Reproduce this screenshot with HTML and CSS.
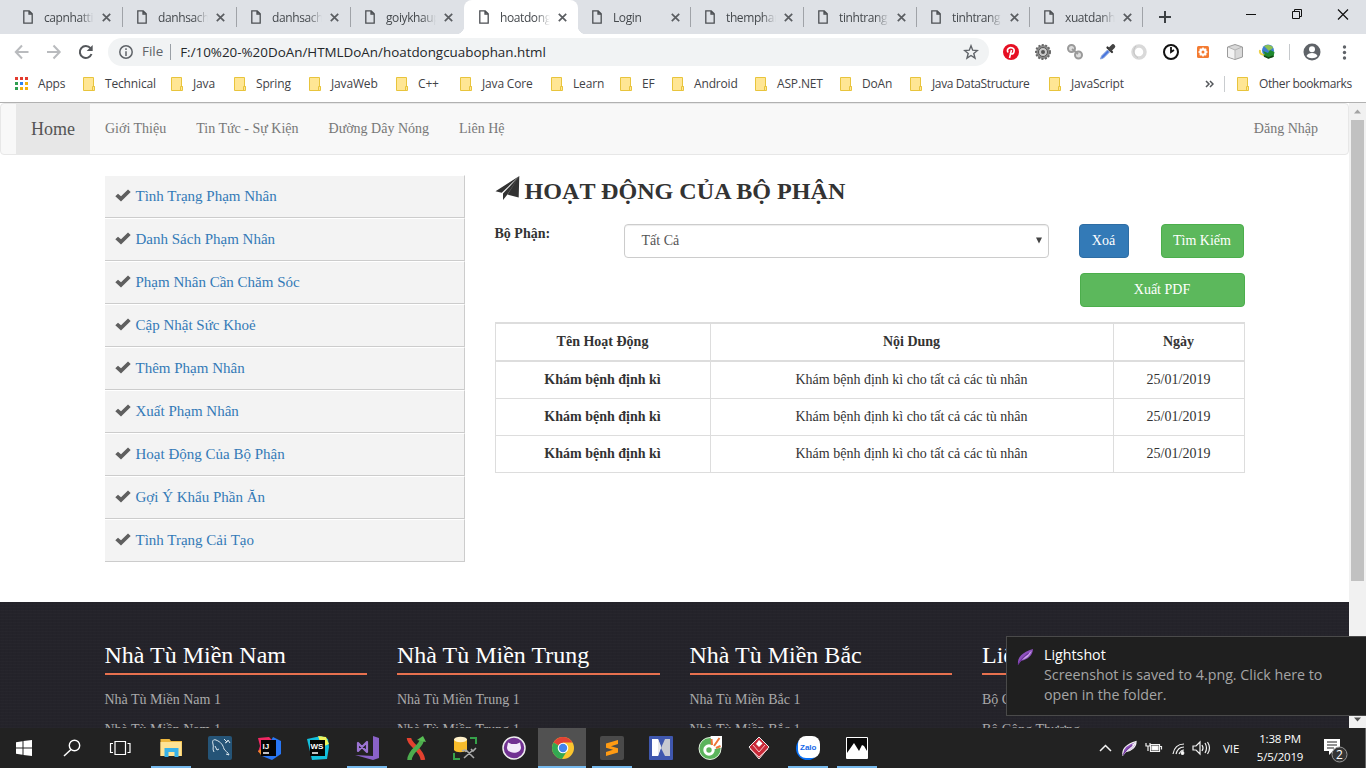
FILE: index.html
```html
<!DOCTYPE html>
<html lang="vi">
<head>
<meta charset="utf-8">
<title>hoatdongcuabophan</title>
<link rel="stylesheet" href="styles.css">
</head>
<body>
<svg class="defs" width="0" height="0">
  <defs>
    <symbol id="page" viewBox="0 0 10 14"><path d="M.8.8h5.4l3 3v9.4H.8z M6 .8V4h3.2" fill="none" stroke="#4c4f53" stroke-width="1.3"/></symbol>
    <symbol id="close" viewBox="0 0 9 9"><path d="M.8.8l7.4 7.4M8.2.8L.8 8.200" stroke="#5a5d61" stroke-width="1.7" fill="none"/></symbol>
    <symbol id="folder" viewBox="0 0 12 14"><path d="M.5.5h10v9h1v4H.5z" fill="#ffe694" stroke="#e8c43c"/><path d="M9.500 13.500V9.500h2" fill="none" stroke="#e8c43c"/></symbol>
    <symbol id="check" viewBox="0 0 16 13"><path d="M.3 7.300L3 4.700l3 2.600L13 .5l2.700 2.600L6 12.500z" fill="#5f5f5f"/></symbol>
    <symbol id="feather" viewBox="0 0 16 16"><path d="M1 15.500C0 9 5 4 15 1c0 6-5 10-11 11z" fill="#8d50bd"/><path d="M4 11.500C7 8 10 6 14 2.500c-2 4.500-5 7.500-9 8.500z" fill="#cba6e8"/><path d="M1 15.500C4 10 8 7 11 5" stroke="#6d3299" fill="none"/></symbol>
  </defs>
</svg>

<header class="tabbar">
  <div class="tab"><svg class="tab-icon"><use href="#page"/></svg><span class="tab-name">capnhatti</span><svg class="tab-close"><use href="#close"/></svg></div>
  <div class="tab"><svg class="tab-icon"><use href="#page"/></svg><span class="tab-name">danhsach</span><svg class="tab-close"><use href="#close"/></svg></div>
  <div class="tab"><svg class="tab-icon"><use href="#page"/></svg><span class="tab-name">danhsach</span><svg class="tab-close"><use href="#close"/></svg></div>
  <div class="tab no-sep"><svg class="tab-icon"><use href="#page"/></svg><span class="tab-name">goiykhaup</span><svg class="tab-close"><use href="#close"/></svg></div>
  <div class="tab active"><svg class="tab-icon"><use href="#page"/></svg><span class="tab-name">hoatdong</span><svg class="tab-close"><use href="#close"/></svg></div>
  <div class="tab"><svg class="tab-icon"><use href="#page"/></svg><span class="tab-name">Login</span><svg class="tab-close"><use href="#close"/></svg></div>
  <div class="tab"><svg class="tab-icon"><use href="#page"/></svg><span class="tab-name">themphan</span><svg class="tab-close"><use href="#close"/></svg></div>
  <div class="tab"><svg class="tab-icon"><use href="#page"/></svg><span class="tab-name">tinhtrang</span><svg class="tab-close"><use href="#close"/></svg></div>
  <div class="tab"><svg class="tab-icon"><use href="#page"/></svg><span class="tab-name">tinhtrang</span><svg class="tab-close"><use href="#close"/></svg></div>
  <div class="tab"><svg class="tab-icon"><use href="#page"/></svg><span class="tab-name">xuatdanh</span><svg class="tab-close"><use href="#close"/></svg></div>
  <svg class="new-tab" width="12" height="12"><path d="M6 0v12M0 6h12" stroke="#3c4043" stroke-width="2"/></svg>
  <svg class="window-buttons" width="110" height="28" fill="none" stroke="#111"><path d="M5 14.500h10"/><path d="M51.500 11.500h7v7h-7zM53.500 11V9.500h7v7h-1.500"/><path d="M97 9.500l10 10M107 9.500l-10 10" stroke-width="1.200"/></svg>
</header>

<div class="toolbar">
  <svg class="nav-icons" width="90" height="20" fill="none" stroke="#b9bbbe" stroke-width="2">
    <path d="M14.500 10H2M8 3.500L1.800 10 8 16.500M33 10h12.500M39.500 3.500l6.200 6.500-6.200 6.500"/>
    <path d="M76.500 6.200A6 6 0 1 0 77.500 12" stroke="#54575b"/><path d="M78.700 3v6h-6z" fill="#54575b" stroke="none"/>
  </svg>
  <div class="omnibox">
    <svg width="14" height="14" fill="none" stroke="#5f6368" stroke-width="1.500"><circle cx="7" cy="7" r="6.200"/><path d="M7 6.300V11M7 3.200v1.700"/></svg>
    <span class="scheme">File</span>
    <span class="address">F:/10%20-%20DoAn/HTMLDoAn/hoatdongcuabophan.html</span>
    <svg class="star" width="16" height="16"><path d="M8 1.800l1.700 4.400 4.700.3-3.600 3 1.200 4.600-4-2.600-4 2.600 1.200-4.600-3.600-3 4.700-.3z" fill="none" stroke="#5f6368" stroke-width="1.400"/></svg>
  </div>
  <svg class="extensions" width="370" height="20">
    <circle cx="11" cy="10" r="8" fill="#e60f23"/><path d="M9.500 16l2-8M8 10.500c-2-4 2-5.500 4.500-4.500 3 1.200 1.500 6-1 6-1 0-1.300-.5-1.500-1" fill="none" stroke="#fff" stroke-width="1.600"/>
    <circle cx="43" cy="10" r="7" fill="#8c8c8c" stroke="#686868" stroke-width="2" stroke-dasharray="2 1.500"/><circle cx="43" cy="10" r="4.500" fill="#c9c9c9" stroke="#555"/><circle cx="43" cy="10" r="2" fill="#555"/>
    <g fill="#ddd" stroke="#9a9a9a" stroke-width="2"><circle cx="71.500" cy="6.500" r="3.500"/><circle cx="78.500" cy="13" r="3.500"/><path d="M72 7l6 5"/></g>
    <path d="M100.500 17l1-3 6-6 2 2-6 6z" fill="#4977df" stroke="#8aa4dc"/><path d="M107.500 5.500l4.500 4.500" stroke="#333" stroke-width="2.200" stroke-linecap="round"/><path d="M110.500 7l2.500-2.500" stroke="#444" stroke-width="4.500" stroke-linecap="round"/>
    <circle cx="139" cy="10" r="6" fill="none" stroke="#d9d9d9" stroke-width="3.500"/><path d="M136 4c-4 4-2 10 2 12" fill="none" stroke="#c3c3c3"/>
    <circle cx="171" cy="10" r="7" fill="#fff" stroke="#111" stroke-width="2"/><path d="M171 5v5l3-2" fill="none" stroke="#111" stroke-width="1.800"/>
    <rect x="197" y="4" width="12" height="12" rx="1.500" fill="#f47b31"/><circle cx="203" cy="10" r="2.600" fill="none" stroke="#fff" stroke-width="2.200"/><path d="M203 5.500V7M203 13v1.500M198.500 10h1.500M206 10h1.500M199.800 6.800l1 1M205.200 12.200l1 1M206.200 6.800l-1 1M200.800 12.200l-1 1" stroke="#fff" stroke-width="1.500"/>
    <path d="M235 2.500l7.500 2.500v10l-7.500 2.500-7.500-2.500V5z" fill="#d9d9d9" stroke="#9b9b9b"/><path d="M228 5l7 3v9l-7-2.500z" fill="#f2f2f2"/><path d="M228 5l7 3 7-3M235 8v9" fill="none" stroke="#b5b5b5"/>
    <circle cx="268" cy="8.500" r="6" fill="#3c7fd0"/><path d="M264 4c3-2 8-1 9 2l-4 3z" fill="#8cc152"/><path d="M260 8c-1 5 5 6 9 4" fill="none" stroke="#ecd24a" stroke-width="2"/><path d="M263 9l5 2 2-3 4.500 2-1 5-5.500 1.500-5-3.500 2-1z" fill="#1f8a2e"/><path d="M264 14l4.500 2 5-2" stroke="#164917" stroke-width="1.500" fill="none"/>
    <path d="M289.500 2v16" stroke="#c6c9cc"/>
    <circle cx="312" cy="10" r="8.500" fill="#5f6368"/><circle cx="312" cy="7.300" r="3" fill="#fff"/><path d="M306.500 14c1.500-4 9.500-4 11 0-2.500 3-8.500 3-11 0z" fill="#fff"/>
    <g fill="#5f6368"><circle cx="344.500" cy="5" r="1.700"/><circle cx="344.500" cy="10.500" r="1.700"/><circle cx="344.500" cy="16" r="1.700"/></g>
  </svg>
</div>

<nav class="bookmarks">
  <a class="bookmark"><svg width="13" height="13"><path d="M0 0h3v3H0zM5 0h3v3H5zM10 0h3v3h-3z" fill="#e33b2e"/><path d="M0 5h3v3H0zM0 10h3v3H0z" fill="#2f9e50"/><path d="M5 5h3v3H5z" fill="#2c82f0"/><path d="M10 5h3v3h-3zM5 10h3v3H5zM10 10h3v3h-3z" fill="#f3b10b"/></svg><span>Apps</span></a>
  <a class="bookmark"><svg><use href="#folder"/></svg><span>Technical</span></a>
  <a class="bookmark"><svg><use href="#folder"/></svg><span>Java</span></a>
  <a class="bookmark"><svg><use href="#folder"/></svg><span>Spring</span></a>
  <a class="bookmark"><svg><use href="#folder"/></svg><span>JavaWeb</span></a>
  <a class="bookmark"><svg><use href="#folder"/></svg><span>C++</span></a>
  <a class="bookmark"><svg><use href="#folder"/></svg><span>Java Core</span></a>
  <a class="bookmark"><svg><use href="#folder"/></svg><span>Learn</span></a>
  <a class="bookmark"><svg><use href="#folder"/></svg><span>EF</span></a>
  <a class="bookmark"><svg><use href="#folder"/></svg><span>Android</span></a>
  <a class="bookmark"><svg><use href="#folder"/></svg><span>ASP.NET</span></a>
  <a class="bookmark"><svg><use href="#folder"/></svg><span>DoAn</span></a>
  <a class="bookmark tight"><svg><use href="#folder"/></svg><span>Java DataStructure</span></a>
  <a class="bookmark"><svg><use href="#folder"/></svg><span>JavaScript</span></a>
  <div class="more"><svg width="9" height="8"><path d="M1 1l3 3-3 3M5 1l3 3-3 3" fill="none" stroke="#54575b" stroke-width="1.500"/></svg></div>
  <a class="bookmark tight"><svg><use href="#folder"/></svg><span>Other bookmarks</span></a>
</nav>

<div class="viewport">
  <div class="document">
    <nav class="site-nav">
      <a class="home">Home</a><a>Giới Thiệu</a><a>Tin Tức - Sự Kiện</a><a>Đường Dây Nóng</a><a>Liên Hệ</a><a class="login">Đăng Nhập</a>
    </nav>
    <div class="container">
      <ul class="side-menu">
        <li><svg><use href="#check"/></svg><a>Tình Trạng Phạm Nhân</a></li>
        <li><svg><use href="#check"/></svg><a>Danh Sách Phạm Nhân</a></li>
        <li><svg><use href="#check"/></svg><a>Phạm Nhân Cần Chăm Sóc</a></li>
        <li><svg><use href="#check"/></svg><a>Cập Nhật Sức Khoẻ</a></li>
        <li><svg><use href="#check"/></svg><a>Thêm Phạm Nhân</a></li>
        <li><svg><use href="#check"/></svg><a>Xuất Phạm Nhân</a></li>
        <li><svg><use href="#check"/></svg><a>Hoạt Động Của Bộ Phận</a></li>
        <li><svg><use href="#check"/></svg><a>Gợi Ý Khẩu Phần Ăn</a></li>
        <li><svg><use href="#check"/></svg><a>Tình Trạng Cải Tạo</a></li>
      </ul>
      <main class="main">
        <h1><svg width="25" height="25"><path d="M24.300 0L.5 15.300l6.200 1.500z M24.300 0L8 17.500V24l4-5z M24.300 0L12.500 18.500l11.200 3z" fill="#333"/></svg><span>HOẠT ĐỘNG CỦA BỘ PHẬN</span></h1>
        <div class="filter">
          <label>Bộ Phận:</label>
          <div class="select"><span>Tất Cả</span><svg width="6" height="7"><path d="M0 .5h6L3 6.500z" fill="#444"/></svg></div>
          <button class="btn primary">Xoá</button>
          <button class="btn success">Tìm Kiếm</button>
        </div>
        <button class="btn success export">Xuất PDF</button>
        <table>
          <thead><tr><th>Tên Hoạt Động</th><th>Nội Dung</th><th>Ngày</th></tr></thead>
          <tbody>
            <tr><th>Khám bệnh định kì</th><td>Khám bệnh định kì cho tất cả các tù nhân</td><td>25/01/2019</td></tr>
            <tr><th>Khám bệnh định kì</th><td>Khám bệnh định kì cho tất cả các tù nhân</td><td>25/01/2019</td></tr>
            <tr><th>Khám bệnh định kì</th><td>Khám bệnh định kì cho tất cả các tù nhân</td><td>25/01/2019</td></tr>
          </tbody>
        </table>
      </main>
    </div>
    <footer class="footer">
      <section><h2>Nhà Tù Miền Nam</h2><p>Nhà Tù Miền Nam 1</p><p>Nhà Tù Miền Nam 1</p></section>
      <section><h2>Nhà Tù Miền Trung</h2><p>Nhà Tù Miền Trung 1</p><p>Nhà Tù Miền Trung 1</p></section>
      <section><h2>Nhà Tù Miền Bắc</h2><p>Nhà Tù Miền Bắc 1</p><p>Nhà Tù Miền Bắc 1</p></section>
      <section><h2>Liê</h2><p>Bộ C</p><p>Bộ Công Thương</p></section>
    </footer>
  </div>
  <div class="scrollbar"><svg width="17" height="17"><path d="M5 10.500l3.500-4 3.500 4z" fill="#a3a3a3"/></svg><div class="thumb"></div><svg class="down" width="17" height="17"><path d="M5 6.500l3.500 4 3.500-4z" fill="#505050"/></svg></div>
</div>

<div class="taskbar">
  <div class="app"><svg viewBox="0 0 24 24"><path d="M4 6.200l6.500-1V11.500H4zM11.500 5L20 4v7.500h-8.500zM4 12.500h6.500v6.300L4 17.800zM11.500 12.500H20V20l-8.500-1z" fill="#fff"/></svg></div>
  <div class="app"><svg viewBox="0 0 24 24"><circle cx="14.500" cy="9.500" r="5.200" fill="none" stroke="#fff" stroke-width="1.400"/><path d="M11 13.500L4 20" stroke="#fff" stroke-width="1.500"/></svg></div>
  <div class="app"><svg viewBox="0 0 24 24" fill="none" stroke="#fff" stroke-width="1.200"><path d="M7 5.500h10.500v13H7zM5 7.500H2.500v9H5M19.500 7.500H22v9h-2.500"/></svg></div>
  <div class="app open"><svg viewBox="0 0 24 24"><path d="M1.500 3h9l1.500 2h11v15H1.500z" fill="#efb83e"/><path d="M1.500 6h21v14h-21z" fill="#ffe394"/><path d="M5.500 12h14v9h-4v-5h-6v5h-4z" fill="#38b2e9"/></svg></div>
  <div class="app"><svg viewBox="0 0 24 24"><rect width="24" height="24" rx="2" fill="#255477"/><path d="M6 16c-2-3 0-5-1-8s0-5 3-4c5 2 7 5 8 9 1 2 4 3 5 6l-3-1M7 10l2 4 2-1M16 3l3 3 1-2 2 3M19 6l-2 1" stroke="#dce8ef" fill="none"/></svg></div>
  <div class="app"><svg viewBox="0 0 24 24"><path d="M1 2l11-1 5 5-8 12-8-2 2-6z" fill="#f12863"/><path d="M16 1l8 4v13l-9 6-10-4z" fill="#2876f4"/><path d="M1 15l5-3 3 8-5-1z" fill="#f18b25"/><rect x="4" y="4" width="15" height="16" fill="#050505"/><text x="5.500" y="12.500" class="jet">IJ</text><path d="M6 17h6" stroke="#fff" stroke-width="1.500"/></svg></div>
  <div class="app"><svg viewBox="0 0 24 24"><path d="M1 3l14-3 7 3 1 8-2 12-15 1z" fill="#13bfdc"/><path d="M12 0l8 1 3 7-7 3z" fill="#eff45d"/><rect x="4" y="4" width="15" height="16" fill="#050505"/><text x="4.500" y="12.500" class="jet">WS</text><path d="M6 17h6" stroke="#fff" stroke-width="1.500"/></svg></div>
  <div class="app open"><svg viewBox="0 0 24 24"><path d="M18 0l6 2v20l-6 2L0 19l18 1z" fill="#8a62c8"/><path d="M3 7v8l9-9v10L3 7z" fill="none" stroke="#9c74d3" stroke-width="2.200" stroke-linejoin="round"/></svg></div>
  <div class="app"><svg viewBox="0 0 24 24"><path d="M5 2c0 7 13 11 14 22" stroke="#e3412f" stroke-width="4.500" fill="none"/><path d="M5.500 24C5.500 14 18 11 18 3" stroke="#4dad4e" stroke-width="4.500" fill="none"/><path d="M13 4l6-4 3 6z" fill="#58bf54"/></svg></div>
  <div class="app"><svg viewBox="0 0 24 24"><path d="M1 3v11c2 3 10 3 13 0V3z" fill="#f8bc2b"/><ellipse cx="7.500" cy="3.500" rx="6.500" ry="2.800" fill="#fff1c9"/><path d="M17 2h6v6M1 17v6h6" fill="none" stroke="#36a24a" stroke-width="2"/><path d="M11 22l9-8M13 14l8 8M18 13l2 2 3-3M9 15l3-1 1 2" stroke="#aaa" stroke-width="1.600" fill="none"/></svg></div>
  <div class="app"><svg viewBox="0 0 24 24"><circle cx="12" cy="12" r="11" fill="#713192" stroke="#eee" stroke-width="1.500"/><path d="M6 6.500l3.500 1.500h5L18 6.500l1 5c0 7-14 7-14 0z" fill="#f3eafa"/></svg></div>
  <div class="app open current"><svg viewBox="0 0 24 24"><circle cx="12" cy="12" r="11" fill="#fbc52e"/><path d="M12 12L2.500 6.500A11 11 0 0 1 21.500 6.500H12z" fill="#e14235"/><path d="M2.500 6.500A11 11 0 0 0 11 23l5-8-4-3z" fill="#33a852"/><circle cx="12" cy="12" r="5.300" fill="#fff"/><circle cx="12" cy="12" r="4.200" fill="#4384ed"/></svg></div>
  <div class="app open"><svg viewBox="0 0 24 24"><rect width="24" height="24" rx="2" fill="#4a4a4a"/><path d="M6 7.500l12-3.500v4l-7 2.300 7 2v4.200L6 20v-4l7-2.300-7-2z" fill="#ff9b13"/></svg></div>
  <div class="app"><svg viewBox="0 0 24 24"><rect width="24" height="24" rx="1" fill="#3f57ae"/><path d="M3 3h6l3 9-3 8H3z" fill="#fff"/><path d="M21 3h-5l-4 9 4 8h5z" fill="#c7c9d1"/><path d="M9 3l3 7-3 10z" fill="#e8e8e8"/></svg></div>
  <div class="app"><svg viewBox="0 0 24 24"><circle cx="12" cy="12.500" r="11" fill="#5bb45c" stroke="#e4f3e0"/><circle cx="11" cy="14" r="4.200" fill="none" stroke="#fff" stroke-width="3"/><path d="M12.500 0H24v11.500l-9.500 2z" fill="#fff"/><path d="M14 9l-.5-6M16 10l5.500-8M18 12l4.500-2" stroke="#ed7638" stroke-width="2"/></svg></div>
  <div class="app"><svg viewBox="0 0 24 24"><path d="M12 1l10 10-10 12L2 11z" fill="#c92938" stroke="#eee"/><path d="M3 13l9 8 9-8M6 9l6 7 6-7" fill="none" stroke="#f6c9cc"/><path d="M12 4l3.500 3.500L12 11 9 8z" fill="#fff"/></svg></div>
  <div class="app open"><svg viewBox="0 0 24 24"><circle cx="11.500" cy="12.500" r="11.500" fill="#0870f5"/><rect x="2" y="0" width="22" height="22" rx="8" fill="#fff"/><text x="4" y="14" class="zalo">Zalo</text></svg></div>
  <div class="app open"><svg viewBox="0 0 24 24"><path d="M1.500 1.500h21v21h-21z" fill="#090909" stroke="#fff"/><path d="M2 17l7-10 5 8 3-6 2 1 3 5v7H2z" fill="#fff"/></svg></div>
  <div class="tray">
    <svg width="120" height="24" fill="none" stroke="#f2f2f2" stroke-width="1.200"><path d="M2 15l5.500-5.500L13 15" stroke-width="1.500"/><svg x="24" y="4" width="15" height="16"><use href="#feather"/></svg><path d="M52.500 8.500h9v7h-9zM48 7v3h4V7M50 10v5M62 10.500h1.500v3"/><path d="M54 10h6v4h-6z" fill="#fff"/><path d="M75 18c1-6 5-10 11-10M78 18c1-4 4-7 8-7M81 18c1-2 3-4 5-4"/><circle cx="84.500" cy="17" r="1.300" fill="#fff"/><path d="M95 10h3l4-4v12l-4-4h-3zM104 9q2 3 0 6M107 7q3 5 0 10M109.500 6q4 6 0 12"/></svg>
    <span class="lang">VIE</span>
    <div class="clock"><span>1:38 PM</span><span>5/5/2019</span></div>
    <svg class="notify" width="26" height="26"><path d="M1 2h16v12H10l-4 4v-4H1z" fill="#fff"/><path d="M4 5h10M4 8h10M4 11h7" stroke="#222" stroke-width="1.200"/><circle cx="16.500" cy="17.500" r="7.500" fill="#343434" stroke="#989898"/><text x="13" y="22" class="badge">2</text></svg>
  </div>
</div>

<aside class="toast"><svg width="17" height="17" viewBox="0 0 16 16"><use href="#feather"/></svg><div><strong>Lightshot</strong><p>Screenshot is saved to 4.png. Click here to<br>open in the folder.</p></div></aside>
</body>
</html>
```
FILE: styles.css
```css
* { box-sizing: border-box; }
body {
  margin: 0; width: 1366px; height: 768px; overflow: hidden; background: #fff;
  display: grid; grid-template-rows: 34px 36px 33px 625px 40px;
  font-family: "Open Sans", "Noto Sans", sans-serif; font-size: 12px; color: #333;
}
svg { display: block; flex: none; }
.defs { position: absolute; }
h1, h2, p, ul { margin: 0; padding: 0; }

.tabbar {
  display: grid; grid-template-columns: 114px 114px 114px 114px 113px 113px 113px 113px 113px 113px 89px 110px;
  padding-left: 9px; background: #dee1e6;
}
.tab { position: relative; display: flex; align-items: center; padding-left: 14px; }
.tab::after { content: ""; position: absolute; right: 0; top: 7px; width: 1px; height: 20px; background: #a0a3a8; }
.tab-icon { width: 10px; height: 14px; }
.tab-name {
  width: 50px; margin-left: 11px; overflow: hidden; white-space: nowrap; color: #45494d; letter-spacing: -.4px;
  -webkit-mask-image: linear-gradient(90deg, #000 72%, transparent); mask-image: linear-gradient(90deg, #000 72%, transparent);
}
.tab-close { width: 9px; height: 9px; margin-left: 8px; }
.tab.no-sep::after, .tab.active::after { display: none; }
.tab.active { background: #fff; border-radius: 8px 8px 0 0; margin-left: -1px; padding-left: 15px; }
.tab.active::before {
  content: ""; position: absolute; bottom: 0; left: -8px; right: -8px; height: 8px;
  background: radial-gradient(circle at 0 0, transparent 8px, #fff 8.500px) left / 8px 8px no-repeat,
    radial-gradient(circle at 100% 0, transparent 8px, #fff 8.500px) right / 8px 8px no-repeat;
}
.new-tab { margin: 11px 0 0 16px; }
.window-buttons { margin-left: 9px; }

.toolbar { display: flex; align-items: center; padding-left: 14px; }
.nav-icons { margin-right: 4px; }
.omnibox {
  display: flex; align-items: center; width: 881px; height: 28px; padding: 0 10px 0 11px; border-radius: 14px;
  background: #f1f3f4; font-size: 13.400px;
}
.scheme { margin-left: 9px; padding-right: 7px; height: 16px; line-height: 15px; border-right: 1px solid #9aa0a6; color: #5f6368; }
.address { margin-left: 9px; color: #24272a; white-space: nowrap; }
.star { margin-left: auto; }
.extensions { margin-left: 11px; }

.bookmarks {
  display: grid; grid-template-columns: 68px 88px 63px 75px 87px 64px 91px 69px 52px 83px 85px 70px 139px 156px 32px 120px;
  padding: 0 0 5px 15px; border-bottom: 1px solid #b1b1b1;
}
.bookmark { display: flex; align-items: center; gap: 10px; white-space: nowrap; color: #3f4246; letter-spacing: -.16px; }
.bookmark.tight { letter-spacing: -.38px; }
.bookmark svg:not([width]) { width: 12px; height: 14px; }
.more { display: flex; align-items: center; height: 16px; align-self: center; margin-right: 12px; border-right: 1px solid #c9cccf; }

.viewport { display: grid; grid-template-columns: 1349px 17px; overflow: hidden; }
.document { overflow: hidden; font-family: "Liberation Serif", serif; font-size: 14px; line-height: 20px; }
.site-nav {
  display: flex; height: 52px; padding: 0 15px; border: 1px solid #e7e7e7; border-radius: 4px;
  background: #f8f8f8; color: #777;
}
.site-nav a { padding: 15px 15px 0; }
.site-nav .home { width: 74px; background: #e7e7e7; color: #555; font-size: 18px; }
.site-nav .login { margin-left: auto; }
.container { display: grid; grid-template-columns: 360px 750px; gap: 30px; margin: 20px 0 0 104.500px; height: 427px; }
.side-menu { list-style: none; }
.side-menu li {
  display: flex; align-items: center; height: 43px; padding-left: 10.500px; background: #f3f3f3;
  border: solid #ccc; border-width: 1px 1px 1px 0; border-top-color: #fff; font-size: 15px;
}
.side-menu svg { width: 16px; height: 13px; margin: 0 4.500px 3px 0; }
.side-menu a { color: #337ab7; padding-bottom: 1px; }
.main { padding-top: 1px; }
h1 { display: flex; height: 32px; font-size: 24.100px; line-height: 30px; font-weight: 700; }
h1 span { margin-left: 5px; }
.filter { display: flex; margin: 16px 0 0 -1px; }
.filter label { width: 130px; padding-left: 1px; font-weight: 700; line-height: 20px; }
.select {
  display: flex; align-items: center; justify-content: space-between; width: 425px; height: 34px; padding: 0 6px 1px 17px;
  border: 1px solid #ccc; border-radius: 4px; box-shadow: inset 0 1px 1px rgba(0,0,0,.075); color: #555;
}
.btn { height: 34px; padding: 0 0 1px; border: 1px solid; border-radius: 4px; color: #fff; font: 14px/20px "Liberation Serif", serif; }
.primary { width: 50px; margin-left: 30px; background: #337ab7; border-color: #2e6da4; }
.success { width: 83px; margin-left: 32px; background: #5cb85c; border-color: #4cae4c; }
.export { display: block; width: 165px; margin: 15px 0 0 auto; }
table { width: 750px; margin-top: 15px; border-collapse: collapse; table-layout: fixed; text-align: center; }
th, td { height: 37px; padding: 0; border: 1px solid #ddd; }
th:first-child { width: 215px; }
th:nth-child(3) { width: 131px; }
thead th { height: 38px; border-top-width: 2px; border-bottom-width: 2px; }

.footer {
  display: grid; grid-template-columns: repeat(4, 262.500px); gap: 30px; height: 126px; padding: 38px 0 0 104.500px; color: #aaa;
  background-color: #24232a;
  background-image: repeating-linear-gradient(0deg, #ffffff03 0 1px, transparent 1px 3px), repeating-linear-gradient(90deg, #00000008 0 1px, transparent 1px 4px);
}
h2 { height: 35px; border-bottom: 2px solid #e8714f; margin-bottom: 15px; font-size: 24px; line-height: 30px; font-weight: 400; color: #fff; white-space: nowrap; }
.footer p { height: 30px; line-height: 20px; }
.scrollbar { display: flex; flex-direction: column; background: #f1f1f1; }
.thumb { width: 13px; height: 461px; margin-left: 2px; background: #c1c1c1; }
.down { margin-top: auto; }

.taskbar { display: flex; background: #222; color: #fff; }
.app { display: flex; align-items: center; justify-content: center; width: 49px; }
.app:nth-child(-n+3) { width: 48px; }
.app:nth-child(4) { margin-left: 2px; }
.app svg { width: 24px; height: 24px; }
.app.open { background: linear-gradient(#76b9ed, #76b9ed) center 38px / 40px 2px no-repeat; }
.app.current { background: linear-gradient(#76b9ed, #76b9ed) 0 38px / 48px 2px no-repeat, linear-gradient(#515151, #515151) 0 0 / 48px 40px no-repeat; }
.jet { font: 700 8px "Liberation Sans", sans-serif; fill: #fff; }
.zalo { font: 700 8px "Liberation Sans", sans-serif; fill: #1769e8; }
.tray { display: flex; align-items: center; width: 268px; margin-left: auto; border-right: 1px solid #666; margin-right: 4px; }
.lang { width: 32px; margin-left: 5px; font-size: 11.500px; }
.clock { display: flex; flex-direction: column; width: 50px; align-items: center; line-height: 18px; font-size: 11.500px; white-space: nowrap; letter-spacing: -.2px; }
.notify { margin: 4px 0 0 18px; }
.badge { font: 12px "Open Sans", sans-serif; fill: #fff; }
.toast {
  position: absolute; left: 1006px; top: 636px; width: 361px; height: 80px; display: flex; gap: 10px; padding: 8px 0 0 10px;
  background: #1f1f1f; border: 1px solid #4a4a4a; color: #a5a5a5; font-size: 14.250px; line-height: 20px; white-space: nowrap;
}
.toast svg { margin-top: 3px; }
.toast strong { display: block; font-weight: 400; color: #fff; }
```
